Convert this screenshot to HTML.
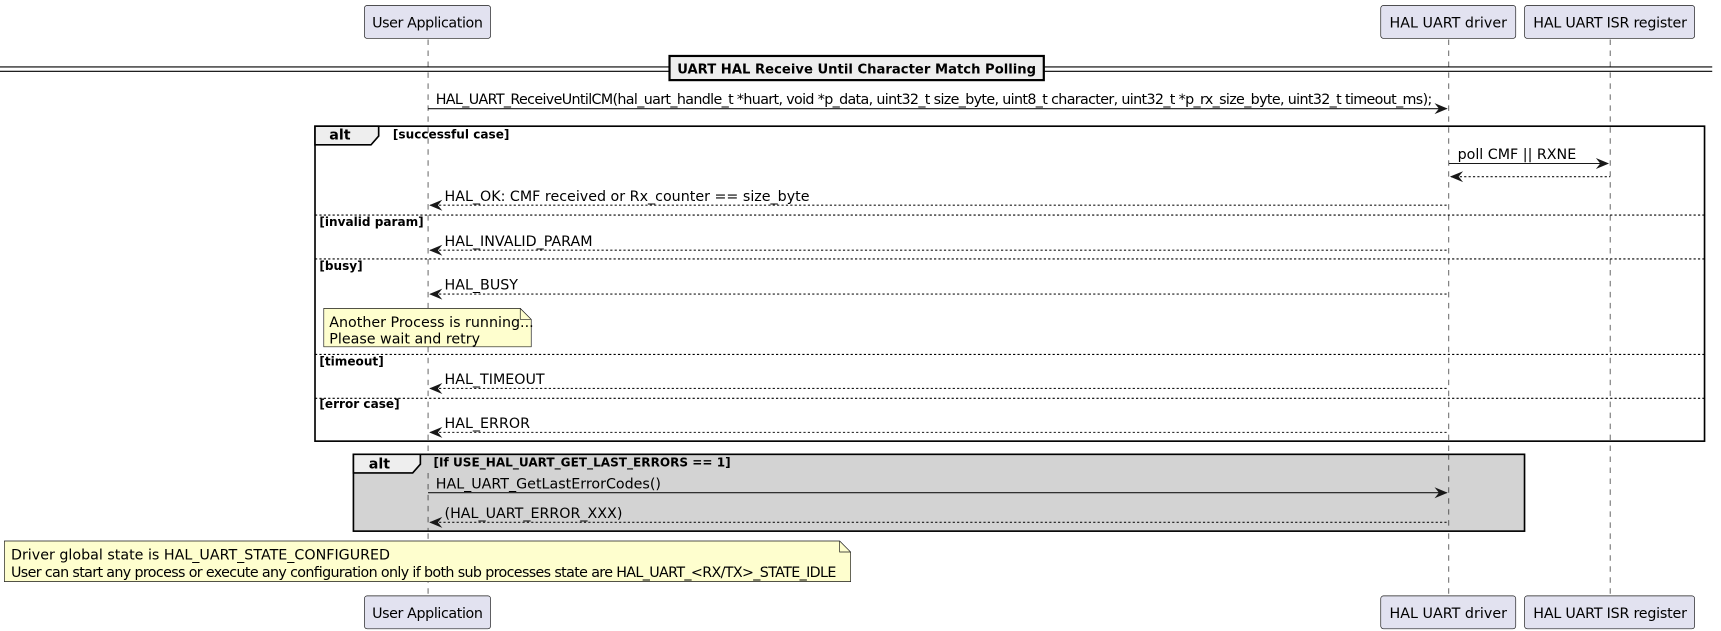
<!DOCTYPE html>
<html><head><meta charset="utf-8"><style>
html,body{margin:0;padding:0;background:#fff;}
svg{display:block;font-family:"DejaVu Sans","Liberation Sans",sans-serif;}
.m{font-size:13px;fill:#000;}
.b{font-size:11px;font-weight:bold;fill:#000;}
.ll{stroke:#181818;stroke-width:0.6;stroke-dasharray:5 5;}
.ar{stroke:#181818;stroke-width:1;fill:none;}
.da{stroke:#181818;stroke-width:1;stroke-dasharray:2 2;fill:none;}
.sep{stroke:#000;stroke-width:1;stroke-dasharray:2 2;}
</style></head><body>
<svg width="1721" height="631" viewBox="0 0 1568 575" preserveAspectRatio="none" xmlns="http://www.w3.org/2000/svg">
<line class="ll" x1="390" y1="36" x2="390" y2="543"/>
<line class="ll" x1="1320" y1="36" x2="1320" y2="543"/>
<line class="ll" x1="1467" y1="36" x2="1467" y2="543"/>

<rect x="287" y="115" width="1266" height="287" fill="none" stroke="#000" stroke-width="1.5"/>
<path d="M287,115 H345 V124 L338,132 H287 Z" fill="#eeeeee" stroke="#000" stroke-width="1.5"/>
<text class="b" x="300" y="127" style="font-size:13px">alt</text>
<text class="b" x="358" y="126">[successful case]</text>
<line class="sep" x1="287" y1="196" x2="1553" y2="196"/>
<text class="b" x="291" y="206">[invalid param]</text>
<line class="sep" x1="287" y1="236" x2="1553" y2="236"/>
<text class="b" x="291" y="246">[busy]</text>
<line class="sep" x1="287" y1="323" x2="1553" y2="323"/>
<text class="b" x="291" y="333">[timeout]</text>
<line class="sep" x1="287" y1="363" x2="1553" y2="363"/>
<text class="b" x="291" y="372">[error case]</text>

<rect x="322" y="414" width="1067" height="70" fill="#d3d3d3" stroke="#000" stroke-width="1.5"/>
<path d="M322,414 H383 V423 L376,431 H322 Z" fill="#eeeeee" stroke="#000" stroke-width="1.5"/>
<text class="b" x="336" y="427" style="font-size:13px">alt</text>
<text class="b" x="395" y="425">[If USE_HAL_UART_GET_LAST_ERRORS == 1]</text>

<line class="ll" x1="390" y1="431" x2="390" y2="484"/>
<line class="ll" x1="1320" y1="414" x2="1320" y2="484"/>

<line x1="0" y1="61" x2="1560" y2="61" stroke="#000" stroke-width="1"/>
<line x1="0" y1="65" x2="1560" y2="65" stroke="#000" stroke-width="1"/>
<rect x="610" y="51" width="341" height="22" fill="#eeeeee" stroke="#000" stroke-width="2"/>
<text class="b" x="617" y="67" style="font-size:12px" textLength="327">UART HAL Receive Until Character Match Polling</text>

<g fill="#e2e2f0" stroke="#181818" stroke-width="0.6">
<rect x="332" y="5" width="115" height="30" rx="2.5"/>
<rect x="1258" y="5" width="123" height="30" rx="2.5"/>
<rect x="1389" y="5" width="155" height="30" rx="2.5"/>
<rect x="332" y="543" width="115" height="30" rx="2.5"/>
<rect x="1258" y="543" width="123" height="30" rx="2.5"/>
<rect x="1389" y="543" width="155" height="30" rx="2.5"/>
</g>
<g class="m">
<text x="339" y="25" textLength="101">User Application</text>
<text x="1266" y="25" textLength="107">HAL UART driver</text>
<text x="1397" y="25" textLength="140">HAL UART ISR register</text>
<text x="339" y="563" textLength="101">User Application</text>
<text x="1266" y="563" textLength="107">HAL UART driver</text>
<text x="1397" y="563" textLength="140">HAL UART ISR register</text>
</g>

<defs>
<path id="hr" d="M0,0 L-12,-5 L-8,0 L-12,5 Z" fill="#181818"/>
<path id="hl" d="M0,0 L12,-5 L8,0 L12,5 Z" fill="#181818"/>
</defs>
<text class="m" x="397" y="95" textLength="908">HAL_UART_ReceiveUntilCM(hal_uart_handle_t *huart, void *p_data, uint32_t size_byte, uint8_t character, uint32_t *p_rx_size_byte, uint32_t timeout_ms);</text>
<line class="ar" x1="390" y1="99" x2="1318" y2="99"/><use href="#hr" x="1319" y="99"/>

<text class="m" x="1328" y="145">poll CMF || RXNE</text>
<line class="ar" x1="1320" y1="149" x2="1465" y2="149"/><use href="#hr" x="1466" y="149"/>
<line class="da" x1="1322" y1="161" x2="1467" y2="161"/><use href="#hl" x="1321" y="161"/>

<text class="m" x="405" y="183">HAL_OK: CMF received or Rx_counter == size_byte</text>
<line class="da" x1="392" y1="187" x2="1320" y2="187"/><use href="#hl" x="391" y="187"/>

<text class="m" x="405" y="224">HAL_INVALID_PARAM</text>
<line class="da" x1="392" y1="228" x2="1320" y2="228"/><use href="#hl" x="391" y="228"/>

<text class="m" x="405" y="264">HAL_BUSY</text>
<line class="da" x1="392" y1="268" x2="1320" y2="268"/><use href="#hl" x="391" y="268"/>

<path d="M295,281 H474 L484,291 V316 H295 Z" fill="#fefece" stroke="#181818" stroke-width="0.6"/>
<path d="M474,281 V291 H484" fill="none" stroke="#181818" stroke-width="0.6"/>
<text class="m" x="300" y="298">Another Process is running...</text>
<text class="m" x="300" y="313">Please wait and retry</text>

<text class="m" x="405" y="350">HAL_TIMEOUT</text>
<line class="da" x1="392" y1="354" x2="1320" y2="354"/><use href="#hl" x="391" y="354"/>

<text class="m" x="405" y="390">HAL_ERROR</text>
<line class="da" x1="392" y1="394" x2="1320" y2="394"/><use href="#hl" x="391" y="394"/>

<text class="m" x="397" y="445">HAL_UART_GetLastErrorCodes()</text>
<line class="ar" x1="390" y1="449" x2="1318" y2="449"/><use href="#hr" x="1319" y="449"/>

<text class="m" x="405" y="472">(HAL_UART_ERROR_XXX)</text>
<line class="da" x1="392" y1="476" x2="1320" y2="476"/><use href="#hl" x="391" y="476"/>

<path d="M4,493 H765 L775,503 V530 H4 Z" fill="#fefece" stroke="#181818" stroke-width="0.6"/>
<path d="M765,493 V503 H775" fill="none" stroke="#181818" stroke-width="0.6"/>
<text class="m" x="10" y="510">Driver global state is HAL_UART_STATE_CONFIGURED</text>
<text class="m" x="10" y="526" textLength="752">User can start any process or execute any configuration only if both sub processes state are HAL_UART_&lt;RX/TX&gt;_STATE_IDLE</text>
</svg>
</body></html>
